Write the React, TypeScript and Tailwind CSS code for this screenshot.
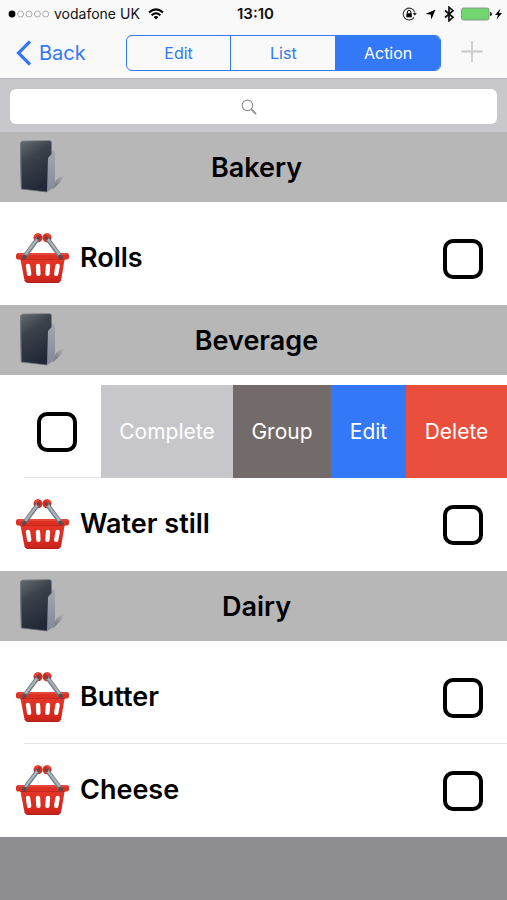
import { useState } from 'react';
import { clsx } from 'clsx';

type Item = { name: string; swiped?: boolean };

const groups: { title: string; items: Item[] }[] = [
  { title: 'Bakery', items: [{ name: 'Rolls' }] },
  { title: 'Beverage', items: [{ name: 'Water', swiped: true }, { name: 'Water still' }] },
  { title: 'Dairy', items: [{ name: 'Butter' }, { name: 'Cheese' }] },
];

const modes = ['Edit', 'List', 'Action'];

const swipeActions = [
  { label: 'Complete', className: 'w-[132px] bg-[#c7c7cb]' },
  { label: 'Group', className: 'w-[98px] bg-[#736b6a]' },
  { label: 'Edit', className: 'w-[75px] bg-[#3378f6]' },
  { label: 'Delete', className: 'w-[101px] bg-[#ea4e3d]' },
];

function FolderIcon() {
  return (
    <svg width="48" height="56" viewBox="0 0 48 56" aria-hidden="true">
      <defs>
        <linearGradient id="folderFront" x1="0" y1="0" x2="0.4" y2="1">
          <stop offset="0" stopColor="#666d70" />
          <stop offset="0.4" stopColor="#3c424b" />
          <stop offset="1" stopColor="#232838" />
        </linearGradient>
        <linearGradient id="folderSide" x1="0" y1="0" x2="0" y2="1">
          <stop offset="0" stopColor="#a4a6b0" />
          <stop offset="1" stopColor="#85889c" />
        </linearGradient>
        <linearGradient id="folderShadow" x1="0" y1="1" x2="1" y2="0">
          <stop offset="0" stopColor="#6c6c6c" />
          <stop offset="0.5" stopColor="#929292" />
          <stop offset="1" stopColor="#b6b6b6" />
        </linearGradient>
      </defs>
      <path d="M34 50 L37 42 Q41 38 45 37 Q44 43 34 51 Z" fill="url(#folderShadow)" />
      <path d="M27 20 L31 12 L36 13 L36 49 L28 54 Z" fill="url(#folderSide)" />
      <path d="M1 5 L3 3 L31 2.5 L32.5 4 L32.5 16 L29 20 L28 54 L2 51 Z" fill="url(#folderFront)" />
      <path d="M1 5 L3 3 L31 2.5 L32.5 4" fill="none" stroke="#868b8e" strokeWidth="0.8" />
      <path d="M1.5 5 L2.4 51" stroke="#787d88" strokeWidth="0.8" />
      <path d="M2 51 L28 54" stroke="#6f7480" strokeWidth="0.7" />
    </svg>
  );
}

function BasketIcon() {
  return (
    <svg width="54" height="52" viewBox="0 0 54 52" className="shrink-0" aria-hidden="true">
      <defs>
        <linearGradient id="basketBody" x1="0" y1="0" x2="0" y2="1">
          <stop offset="0" stopColor="#e5382a" />
          <stop offset="0.75" stopColor="#d8281d" />
          <stop offset="1" stopColor="#c0231a" />
        </linearGradient>
      </defs>
      <path d="M4 24 H49 L45.5 45 Q44.5 50 41 50 H12.5 Q9 50 8 45 Z" fill="url(#basketBody)" />
      <path d="M8.5 47 Q9.5 49.5 12.5 49.5 H41 Q44 49.5 45 47" fill="none" stroke="#ad2018" strokeWidth="0.9" />
      <rect x="0" y="20" width="53" height="6.5" rx="2.6" fill="#dc3024" />
      <path d="M2.5 21 H50.5" stroke="#ee6152" strokeLinecap="round" />
      <path d="M4 26.5 H49" stroke="#c0251b" strokeWidth="0.8" />
      <g stroke="#fff" strokeWidth="4.4" strokeLinecap="round">
        <path d="M12 33 L13.2 40.8" />
        <path d="M22 33 L22.4 40.8" />
        <path d="M32 33 L31.4 40.8" />
        <path d="M41.6 33 L40.2 40.8" />
      </g>
      <circle cx="22" cy="4.8" r="4.5" fill="#d7281e" />
      <circle cx="31" cy="4.8" r="4.5" fill="#d7281e" />
      <g strokeLinecap="round" fill="none">
        <path d="M21.5 6 L8.5 23.5 M31.5 6 L44.5 23.5" stroke="#717c84" strokeWidth="4.6" />
        <path d="M21.2 6.2 L8.4 23 M31.8 6.2 L44.6 23" stroke="#aab4ba" strokeWidth="2.2" />
        <path d="M8.6 23.8 L8 24.6 M44.4 23.8 L45 24.6" stroke="#6a4444" strokeWidth="4.2" />
      </g>
      <path d="M18.5 3.6 Q20 1 23 1.2 M30 1.2 Q33.5 1 34.5 3.6" fill="none" stroke="#e94a3b" strokeWidth="1.6" />
      <circle cx="22.4" cy="5.2" r="1.7" fill="#6b4244" />
      <circle cx="30.6" cy="5.2" r="1.7" fill="#6b4244" />
    </svg>
  );
}

function StatusBar() {
  return (
    <div className="grid h-7 grid-cols-3 items-center pr-1 pl-2 text-sm text-[#111]">
      <div className="flex items-center gap-1 whitespace-nowrap">
        <svg width="42" height="10" viewBox="0 0 42 10" aria-hidden="true">
          <circle cx="4" cy="5" r="3.4" fill="#000" />
          {[12.6, 21, 29.4, 37.8].map((cx) => (
            <circle key={cx} cx={cx} cy="5" r="3" fill="none" stroke="#999" strokeWidth="0.8" />
          ))}
        </svg>
        <span>vodafone UK</span>
        <svg width="16" height="12" viewBox="0 0 16 12" className="ml-1" aria-hidden="true">
          <g fill="none" stroke="#000" strokeWidth="2">
            <path d="M1 4.4 Q8 -1.6 15 4.4" />
            <path d="M3.6 7.2 Q8 3.4 12.4 7.2" />
          </g>
          <path d="M5.6 9 Q8 7 10.4 9 L8 11.6 Z" fill="#000" />
        </svg>
      </div>
      <div className="text-center text-[15px] font-semibold">13:10</div>
      <div className="flex items-center justify-end gap-2">
        <svg width="15" height="14" viewBox="0 0 15 14" aria-hidden="true">
          <path d="M12 10.4 A5.9 5.9 0 1 1 12.8 5.4" fill="none" stroke="#333" strokeWidth="1.1" />
          <path d="M10.8 6 H14.8 L12.8 8.8 Z" fill="#222" />
          <rect x="4.4" y="6.3" width="5.4" height="4" rx="0.5" fill="#000" />
          <path d="M5.4 6.5 V5 Q5.4 3.4 7.1 3.4 Q8.8 3.4 8.8 5 V6.5" fill="none" stroke="#000" />
        </svg>
        <svg width="11" height="11" viewBox="0 0 11 11" aria-hidden="true">
          <path d="M10.5 0.5 L6.4 10.5 L5.6 5.6 L0.5 5 Z" fill="#000" />
        </svg>
        <svg width="10" height="16" viewBox="0 0 10 16" aria-hidden="true">
          <path d="M1 4.5 L9 11.3 L5 14.8 V1.2 L9 4.7 L1 11.5" fill="none" stroke="#111" strokeWidth="1.7" />
        </svg>
        <svg width="42" height="14" viewBox="0 0 42 14" className="-ml-px" aria-hidden="true">
          <rect x="0.5" y="1" width="27.5" height="12" rx="2" fill="#70d66d" stroke="#849184" strokeWidth="0.9" />
          <path d="M29 5 Q31 5.2 31 7 Q31 8.8 29 9 Z" fill="#222" />
          <path d="M39.5 1.5 L34 8 H37 L35.5 12.5 L41 6 H38 Z" fill="#000" />
        </svg>
      </div>
    </div>
  );
}

function CheckBox({ label }: { label: string }) {
  return (
    <input
      type="checkbox"
      aria-label={label}
      className="size-10 shrink-0 appearance-none rounded-[10px] border-4 border-black bg-white checked:bg-black"
    />
  );
}

function ItemRow({ item, divided }: { item: Item; divided: boolean }) {
  if (item.swiped) {
    return (
      <li className="relative flex h-[93px]">
        <div className="flex flex-1 items-center justify-end pr-6">
          <CheckBox label={item.name} />
        </div>
        <div className="flex">
          {swipeActions.map((action) => (
            <button key={action.label} type="button" className={clsx('text-[21px] text-white', action.className)}>
              {action.label}
            </button>
          ))}
        </div>
        {divided ? <div className="absolute bottom-0 left-6 w-[77px] border-b border-[#e4e4e6]" /> : null}
      </li>
    );
  }

  return (
    <li className="relative flex h-[93px] items-center pr-6 pl-4">
      <BasketIcon />
      <span className="ml-2.5 flex-1 text-[27px] font-semibold text-black">{item.name}</span>
      <CheckBox label={item.name} />
      {divided ? <div className="absolute right-0 bottom-0 left-6 border-b border-[#e4e4e6]" /> : null}
    </li>
  );
}

export default function App() {
  const [mode, setMode] = useState('Action');

  return (
    <div className="min-h-screen bg-[#8e8d92] font-['Inter','Liberation_Sans',sans-serif]">
      <header className="border-b border-[#b5b5b8] bg-[#f9f9f9]">
        <StatusBar />
        <div className="flex h-[50px] items-center pr-6 pl-4 text-[#3378f6]">
          <button type="button" className="flex items-center gap-2 text-xl">
            <svg width="15" height="26" viewBox="0 0 15 26" aria-hidden="true">
              <path d="M14 1.5 L2.5 13 L14 24.5" fill="none" stroke="currentColor" strokeWidth="3.2" />
            </svg>
            Back
          </button>
          <div className="mr-5 ml-10 flex h-9 flex-1 overflow-hidden rounded-md border border-[#3378f6]">
            {modes.map((label) => (
              <button
                key={label}
                type="button"
                onClick={() => setMode(label)}
                className={clsx(
                  'flex-1 border-l border-[#3378f6] text-base first:border-l-0',
                  mode === label && 'bg-[#3378f6] text-white',
                )}
              >
                {label}
              </button>
            ))}
          </div>
          <button type="button" aria-label="Add">
            <svg width="22" height="26" viewBox="0 0 22 26" aria-hidden="true">
              <path d="M11 1 V22 M0.5 11.5 H21.5" stroke="#c9c9cb" strokeWidth="1.8" />
            </svg>
          </button>
        </div>
      </header>

      <div className="bg-[#c8c7cc] px-2.5 pt-2.5 pb-2">
        <div className="relative">
          <input
            type="search"
            aria-label="Search"
            className="block h-[35px] w-full rounded-md bg-white px-3 text-base outline-none"
          />
          <div className="pointer-events-none absolute inset-0 flex items-center justify-center pr-2.5">
            <svg width="16" height="16" viewBox="0 0 18 18" fill="none" stroke="#8e8e93" aria-hidden="true">
              <circle cx="7.2" cy="7.2" r="5.9" strokeWidth="1.3" />
              <path d="M11.4 11.4 L17 17" strokeWidth="1.9" />
            </svg>
          </div>
        </div>
      </div>

      <main>
        {groups.map((group) => (
          <section key={group.title}>
            <div className="relative flex h-[70px] items-center justify-center bg-[#b7b7b7]">
              <div className="absolute top-1.5 left-[19px]">
                <FolderIcon />
              </div>
              <h2 className="pt-0.5 pl-1.5 text-[27px] font-semibold text-black">{group.title}</h2>
            </div>
            <ul className="bg-white pt-2.5">
              {group.items.map((item, index) => (
                <ItemRow key={item.name} item={item} divided={index < group.items.length - 1} />
              ))}
            </ul>
          </section>
        ))}
      </main>
    </div>
  );
}
